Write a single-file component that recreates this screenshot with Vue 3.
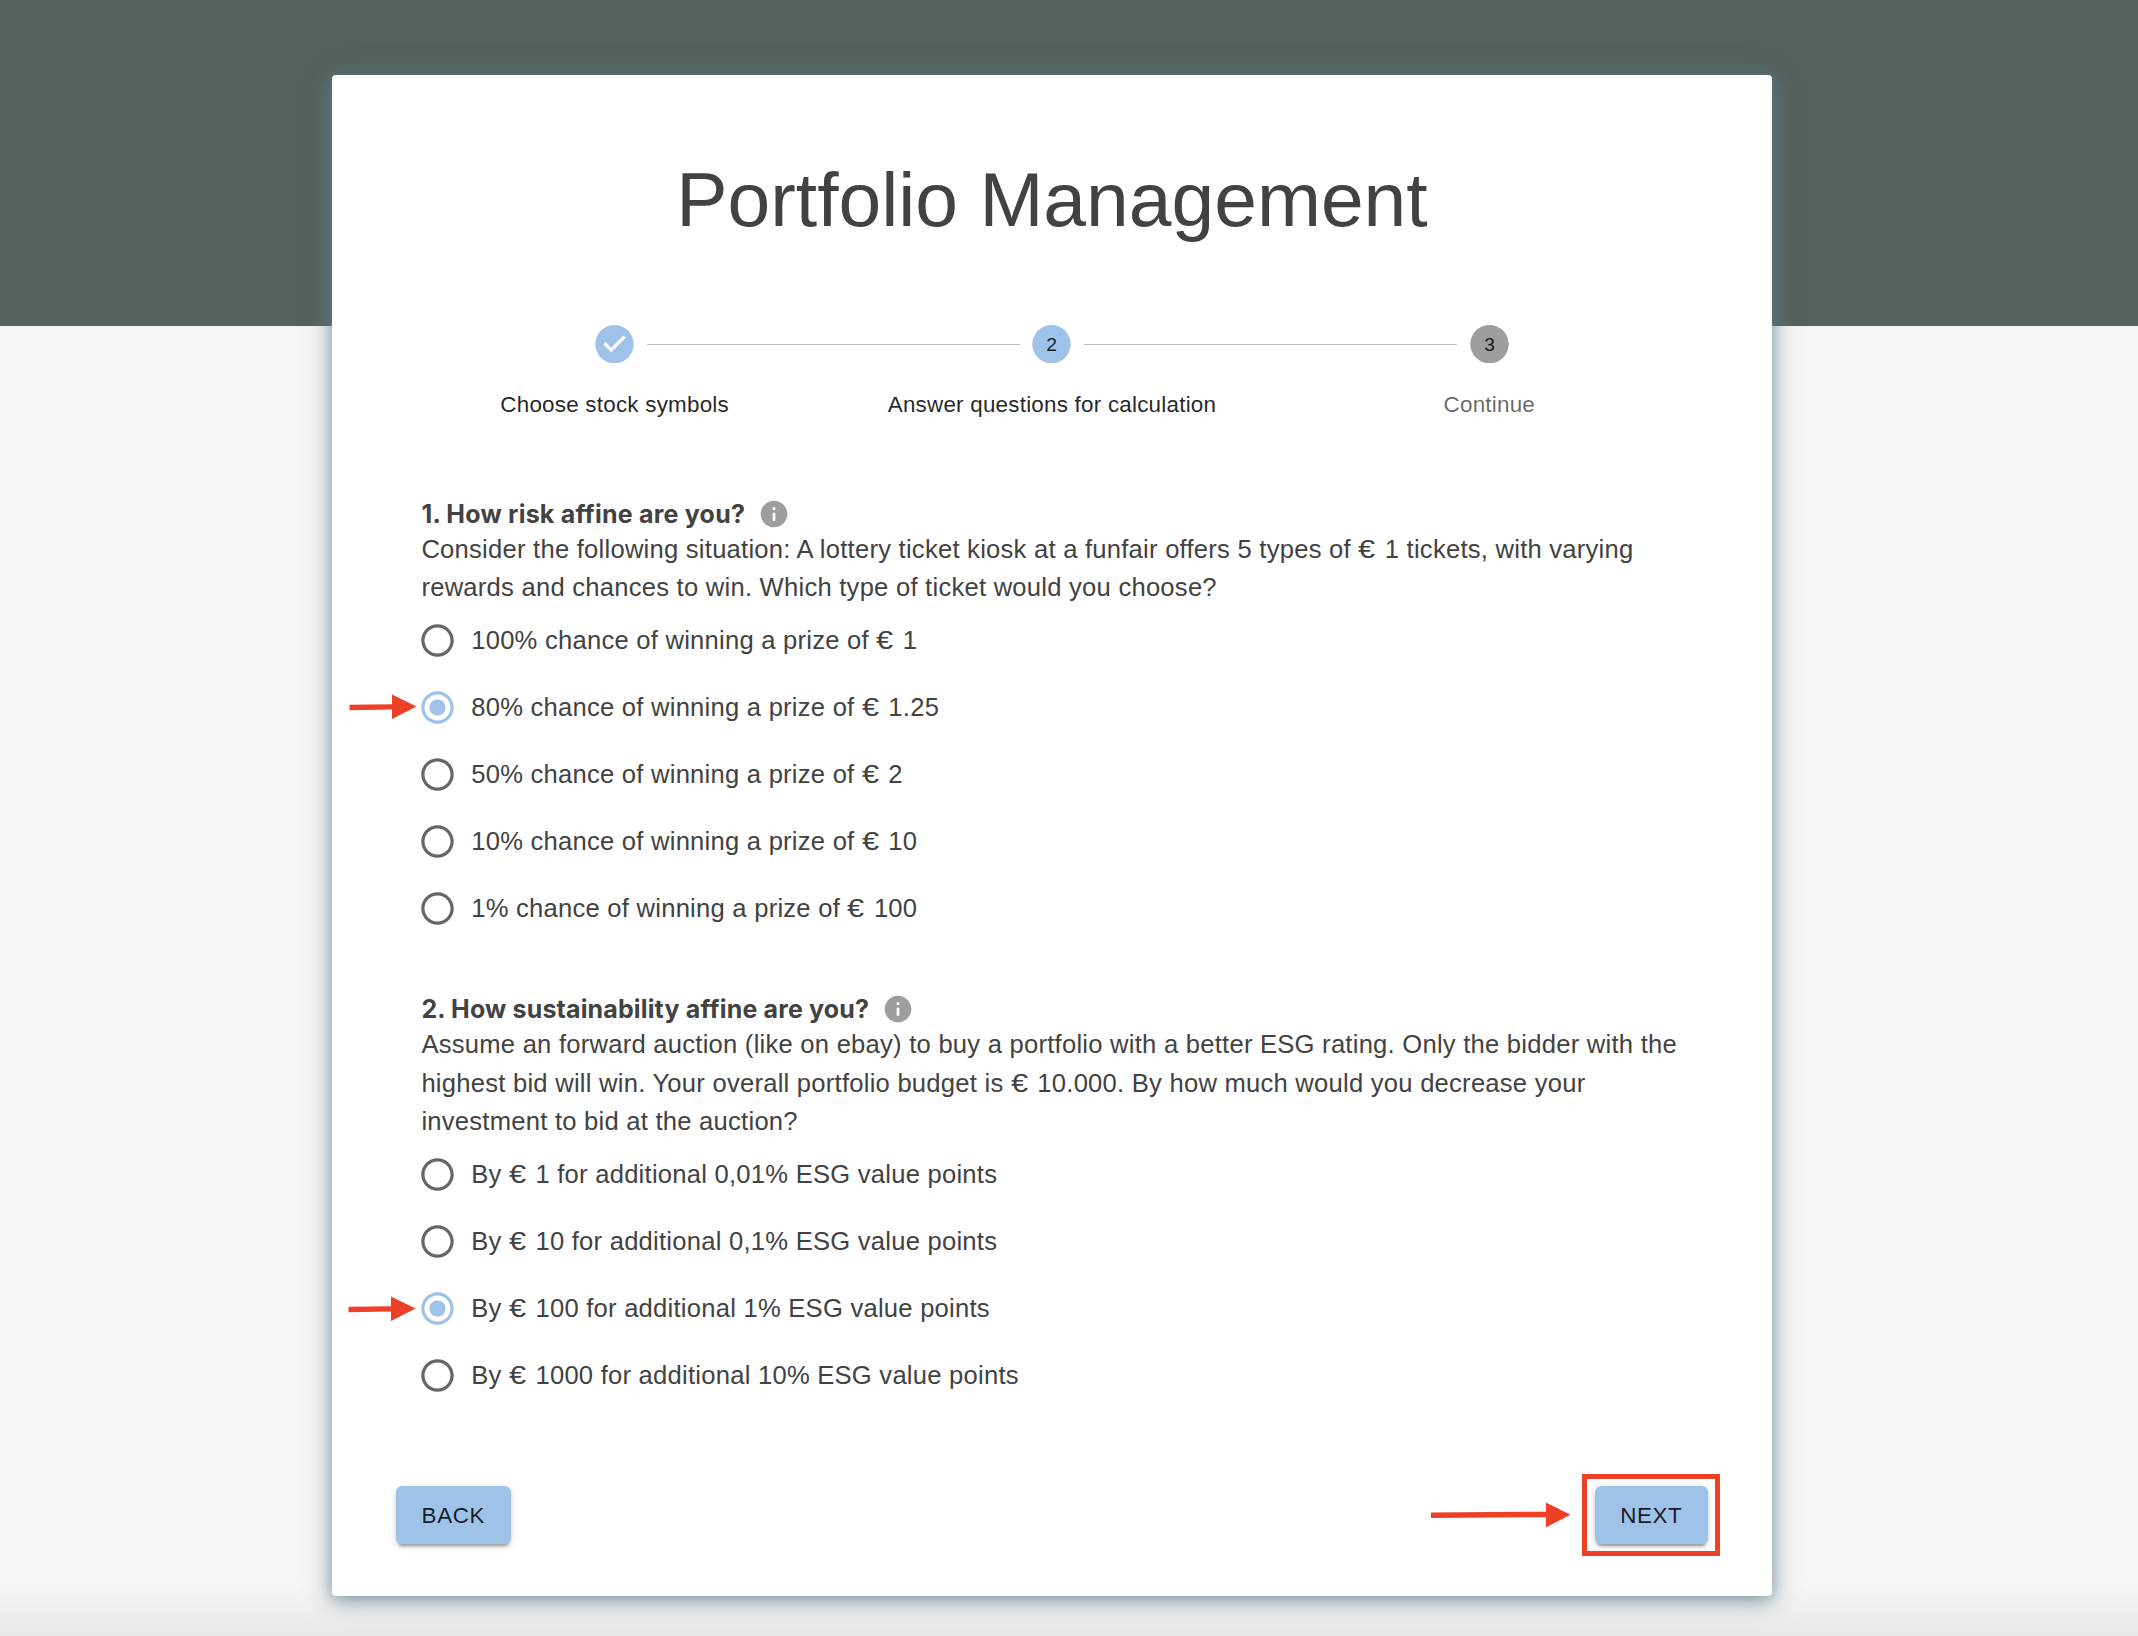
<script setup>
import { reactive } from 'vue'

const steps = [
  { label: 'Choose stock symbols', state: 'done' },
  { label: 'Answer questions for calculation', state: 'active' },
  { label: 'Continue', state: 'idle' },
]

const questions = reactive([
  {
    title: '1. How risk affine are you?',
    lines: [
      'Consider the following situation: A lottery ticket kiosk at a funfair offers 5 types of € 1 tickets, with varying',
      'rewards and chances to win. Which type of ticket would you choose?',
    ],
    selected: 1,
    options: [
      '100% chance of winning a prize of € 1',
      '80% chance of winning a prize of € 1.25',
      '50% chance of winning a prize of € 2',
      '10% chance of winning a prize of € 10',
      '1% chance of winning a prize of € 100',
    ],
  },
  {
    title: '2. How sustainability affine are you?',
    lines: [
      'Assume an forward auction (like on ebay) to buy a portfolio with a better ESG rating. Only the bidder with the',
      'highest bid will win. Your overall portfolio budget is € 10.000. By how much would you decrease your',
      'investment to bid at the auction?',
    ],
    selected: 2,
    options: [
      'By € 1 for additional 0,01% ESG value points',
      'By € 10 for additional 0,1% ESG value points',
      'By € 100 for additional 1% ESG value points',
      'By € 1000 for additional 10% ESG value points',
    ],
  },
])

// Splits a text so that each euro sign can carry its own width.
const parts = (text) => text.split(/(€)/)
</script>

<template>
  <div class="page">
    <main class="card">
      <h1 class="title">Portfolio Management</h1>

      <ol class="stepper">
        <li v-for="(step, i) in steps" :key="step.label" class="step" :class="step.state">
          <span v-if="i > 0" class="connector"></span>
          <svg class="step-icon" viewBox="0 0 24 24">
            <path
              v-if="step.state === 'done'"
              d="M12 0a12 12 0 1 0 0 24 12 12 0 1 0 0-24zm-2 17l-5-5 1.4-1.4 3.6 3.6 7.6-7.6L19 8l-9 9z"
            />
            <template v-else>
              <circle cx="12" cy="12" r="12" />
              <text x="12" y="16.1" text-anchor="middle">{{ i + 1 }}</text>
            </template>
          </svg>
          <span class="step-label">{{ step.label }}</span>
        </li>
      </ol>

      <section v-for="q in questions" :key="q.title" class="question">
        <h2 class="q-title">
          <span>{{ q.title }}</span>
          <svg class="info" viewBox="0 0 24 24">
            <path d="M12 2C6.48 2 2 6.48 2 12s4.48 10 10 10 10-4.48 10-10S17.52 2 12 2zm1 15h-2v-6h2v6zm0-8h-2V7h2v2z" />
          </svg>
        </h2>
        <p class="q-text">
          <span v-for="line in q.lines" :key="line" class="line"><span v-for="(p, k) in parts(line)" :key="k" :class="{ euro: p === '€' }">{{ p }}</span></span>
        </p>
        <div class="options">
          <label v-for="(opt, i) in q.options" :key="opt" class="option" :class="{ checked: i === q.selected }" @click="q.selected = i">
            <svg class="radio" viewBox="0 0 24 24">
              <path d="M12 2C6.48 2 2 6.48 2 12s4.48 10 10 10 10-4.48 10-10S17.52 2 12 2zm0 18c-4.42 0-8-3.58-8-8s3.58-8 8-8 8 3.58 8 8-3.58 8-8 8z" />
              <circle v-if="i === q.selected" cx="12" cy="12" r="5" />
            </svg>
            <span><span v-for="(p, k) in parts(opt)" :key="k" :class="{ euro: p === '€' }">{{ p }}</span></span>
            <svg v-if="i === q.selected" class="arrow" viewBox="0 0 68 26">
              <path d="M0.5 10.8L43 10.2V0.5L67.5 12.5 43 25V15.6L0.5 16.2z" />
            </svg>
          </label>
        </div>
      </section>

      <footer class="actions">
        <button class="btn">BACK</button>
        <div class="next">
          <svg class="long-arrow" viewBox="0 0 140 26">
            <path d="M0 10.5L115 9.7V0.5L139.5 12.8 115 25.3V15.2L0 16z" />
          </svg>
          <button class="btn">NEXT</button>
          <span class="highlight"></span>
        </div>
      </footer>
    </main>
  </div>
</template>

<style>
body {
  margin: 0;
}
</style>

<style scoped>
.page {
  box-sizing: border-box;
  height: 1636px;
  padding: 75px 366px 0 332px;
  overflow: hidden;
  background:
    linear-gradient(rgba(0, 0, 0, 0), rgba(0, 0, 0, 0.055)) 0 100% / 100% 50px no-repeat,
    linear-gradient(#546360, #546360) 0 0 / 100% 326px no-repeat,
    #f5f5f5;
  font-family: "Liberation Sans", Arial, sans-serif;
  color: #424242;
}
.card {
  box-sizing: border-box;
  width: 1440px;
  height: 1521px;
  border-radius: 4px;
  background: #fff;
  box-shadow: 0 3px 18px rgba(96, 125, 139, 0.8), 0 3px 32px rgba(96, 125, 139, 0.25);
  display: flex;
  flex-direction: column;
  padding-top: 77px;
}
.title {
  margin: 0;
  height: 96px;
  line-height: 95px;
  font-size: 76.8px;
  font-weight: 400;
  text-align: center;
}
.stepper {
  list-style: none;
  margin: 77px 64px 0;
  padding: 0;
  height: 94px;
  display: flex;
}
.step {
  flex: 1;
  position: relative;
  display: flex;
  flex-direction: column;
  align-items: center;
}
.connector {
  position: absolute;
  top: 19px;
  left: calc(-50% + 32px);
  right: calc(50% + 32px);
  height: 1px;
  background: #bdbdbd;
}
.step-icon {
  flex: none;
  width: 39px;
  height: 38.4px;
  fill: #9fc3e8;
}
.step.idle .step-icon {
  fill: #9e9e9e;
}
.step-icon text {
  font-size: 12px;
  fill: rgba(0, 0, 0, 0.87);
}
.step-label {
  flex: none;
  margin-top: 25.6px;
  font-size: 22.4px;
  line-height: 32px;
  letter-spacing: 0.23px;
  color: rgba(0, 0, 0, 0.87);
}
.idle .step-label {
  color: rgba(0, 0, 0, 0.6);
}
.question {
  margin: 76px 0 0 89.4px;
}
.question + .question {
  margin-top: 48px;
}
.q-title {
  margin: 0;
  height: 38px;
  display: flex;
  align-items: center;
  gap: 13px;
  font-family: Inter, "Liberation Sans", sans-serif;
  font-size: 25px;
  font-weight: 700;
  letter-spacing: 0.22px;
}
.question + .question .q-title {
  letter-spacing: 0.15px;
}
.info {
  width: 32px;
  height: 32px;
  fill: #9e9e9e;
}
.q-text {
  margin: -3px 0 0;
  font-size: 25.6px;
  line-height: 38.4px;
  letter-spacing: 0.24px;
}
.line {
  display: block;
  white-space: nowrap;
}
.euro {
  display: inline-block;
  width: 19.2px;
  line-height: 1;
  letter-spacing: 0;
  transform: scaleX(1.2);
  transform-origin: 0 50%;
}
.option {
  position: relative;
  display: flex;
  align-items: center;
  gap: 14.2px;
  height: 67.1px;
  margin-left: -3.4px;
  font-size: 25.6px;
  letter-spacing: 0.24px;
  white-space: pre;
}
.radio {
  width: 39px;
  height: 39px;
  fill: #666;
}
.checked .radio {
  fill: #9fc3e8;
}
.arrow {
  position: absolute;
  left: -69px;
  top: 20px;
  width: 68px;
  height: 26px;
  fill: #ee4027;
}
.question + .question .arrow {
  left: -70px;
  top: 21px;
}
.actions {
  display: flex;
  justify-content: space-between;
  margin: 77px 64px 0;
}
.btn {
  height: 58px;
  padding: 2px 25.6px 0;
  border: 0;
  border-radius: 6.4px;
  background: #9fc3e8;
  box-shadow: 0 5px 2px -3px rgba(0, 0, 0, 0.2), 0 3px 3px rgba(0, 0, 0, 0.14), 0 2px 8px rgba(0, 0, 0, 0.12);
  font-family: inherit;
  font-size: 22.4px;
  letter-spacing: 0.64px;
  color: rgba(0, 0, 0, 0.87);
}
.next {
  position: relative;
}
.long-arrow {
  position: absolute;
  left: -164px;
  top: 16px;
  width: 140px;
  height: 26px;
  fill: #ee4027;
}
.highlight {
  position: absolute;
  inset: -12px -12px -12px -13px;
  border: 5px solid #ee4027;
  pointer-events: none;
}
</style>
